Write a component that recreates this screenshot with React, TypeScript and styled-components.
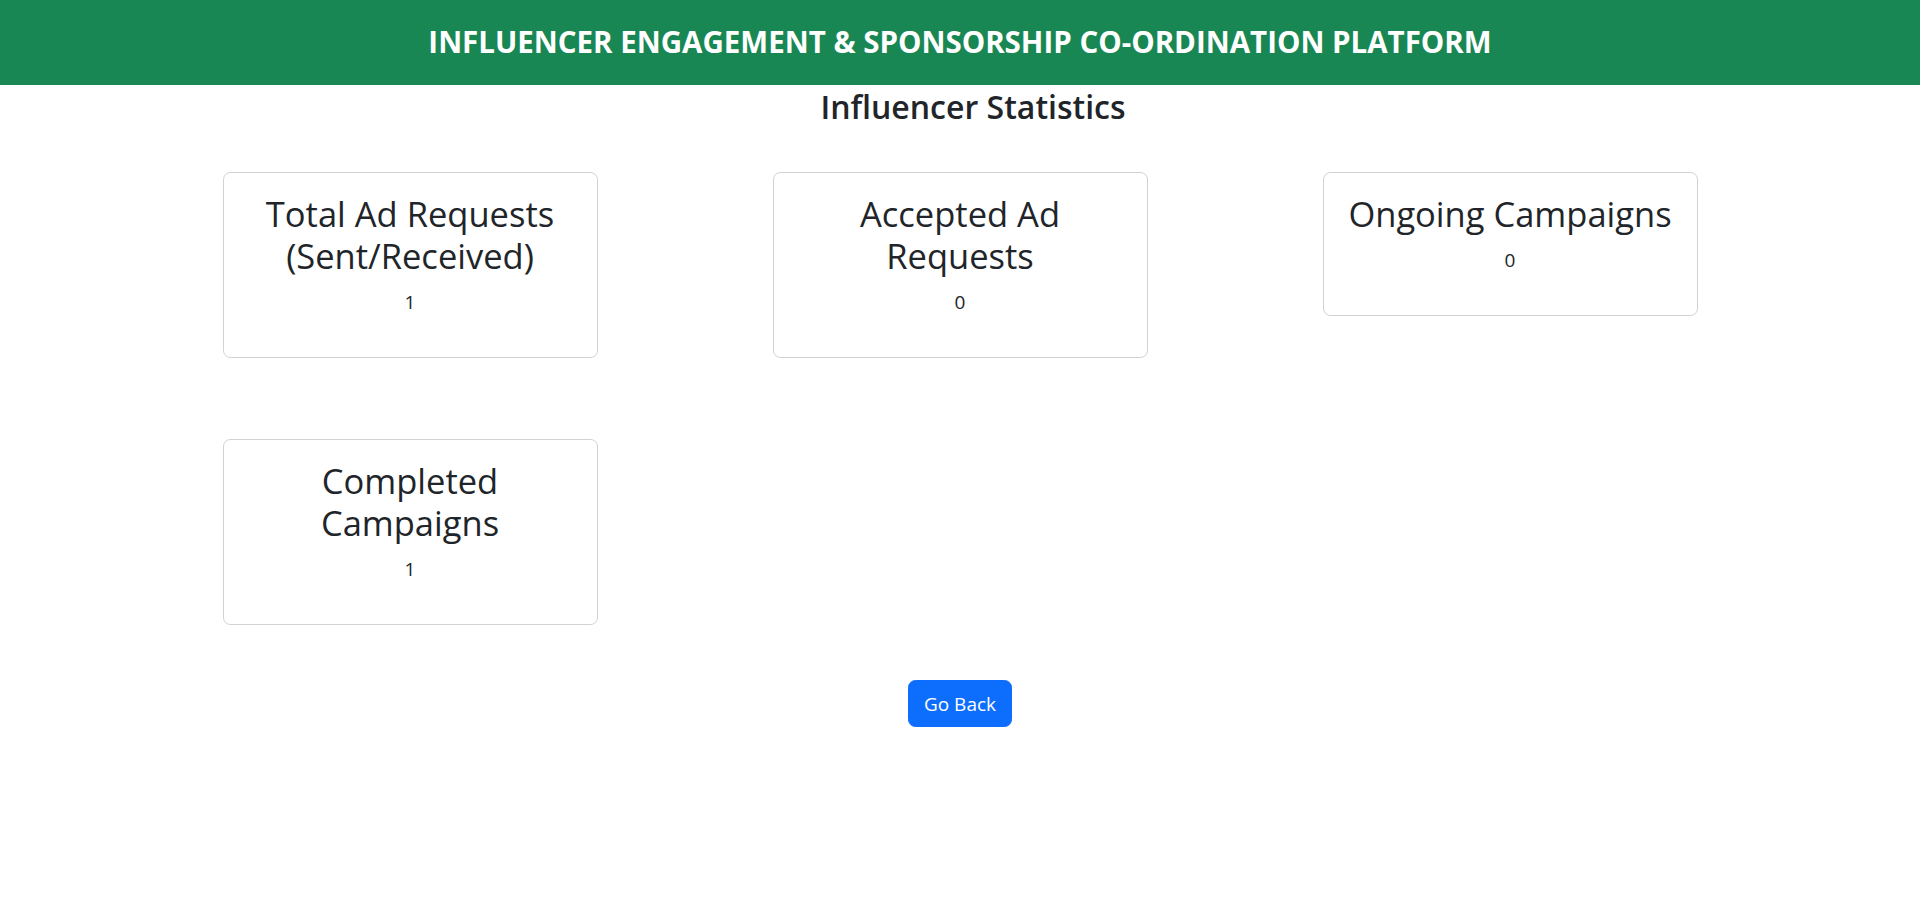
import React from "react";
import styled, { createGlobalStyle } from "styled-components";

const GlobalStyle = createGlobalStyle`
  html, body {
    margin: 0;
    padding: 0;
    background: #ffffff;
  }
  body {
    font-family: "Open Sans", "Noto Sans", "Liberation Sans", sans-serif;
    color: #212529;
  }
  * { box-sizing: border-box; }
`;

const Header = styled.header`
  height: 85px;
  background: #198754;
  display: flex;
  align-items: center;
  justify-content: center;
`;

const HeaderTitle = styled.h1`
  margin: 0 0 1px;
  color: #ffffff;
  font-size: 29.5px;
  font-weight: 700;
  line-height: 1.2;
`;

const Main = styled.main`
  display: flex;
  flex-direction: column;
  align-items: center;
`;

const PageTitle = styled.h2`
  margin: 4px 0 0 26px;
  font-size: 32px;
  font-weight: 600;
  line-height: 36px;
  text-align: center;
`;

const Grid = styled.div`
  width: 1650px;
  margin-top: 47px;
  display: grid;
  grid-template-columns: repeat(3, 550px);
  row-gap: 81px;
  align-items: start;
`;

const Cell = styled.div`
  display: flex;
  justify-content: center;
`;

const Card = styled.div`
  width: 375px;
  border: 1.25px solid rgba(0, 0, 0, 0.175);
  border-radius: 7.5px;
  padding: 20px;
  text-align: center;
`;

const CardTitle = styled.h3`
  margin: 0 0 10px;
  font-size: 34.5px;
  font-weight: 500;
  line-height: 42px;
`;

const CardValue = styled.p`
  margin: 0 0 20px;
  font-size: 19px;
  line-height: 30px;
`;

const BackButton = styled.button`
  margin-top: 55px;
  height: 47px;
  padding: 0 15px;
  border: 1.25px solid #0d6efd;
  border-radius: 7.5px;
  background: #0d6efd;
  color: #ffffff;
  font-family: inherit;
  font-size: 19px;
  line-height: 30px;
  cursor: pointer;
`;

const stats = [
  { title: "Total Ad Requests (Sent/Received)", value: 1 },
  { title: "Accepted Ad Requests", value: 0 },
  { title: "Ongoing Campaigns", value: 0 },
  { title: "Completed Campaigns", value: 1 },
];

export default function App() {
  return (
    <>
      <GlobalStyle />
      <Header>
        <HeaderTitle>INFLUENCER ENGAGEMENT &amp; SPONSORSHIP CO-ORDINATION PLATFORM</HeaderTitle>
      </Header>
      <Main>
        <PageTitle>Influencer Statistics</PageTitle>
        <Grid>
          {stats.map((s) => (
            <Cell key={s.title}>
              <Card>
                <CardTitle>{s.title}</CardTitle>
                <CardValue>{s.value}</CardValue>
              </Card>
            </Cell>
          ))}
        </Grid>
        <BackButton type="button">Go Back</BackButton>
      </Main>
    </>
  );
}
